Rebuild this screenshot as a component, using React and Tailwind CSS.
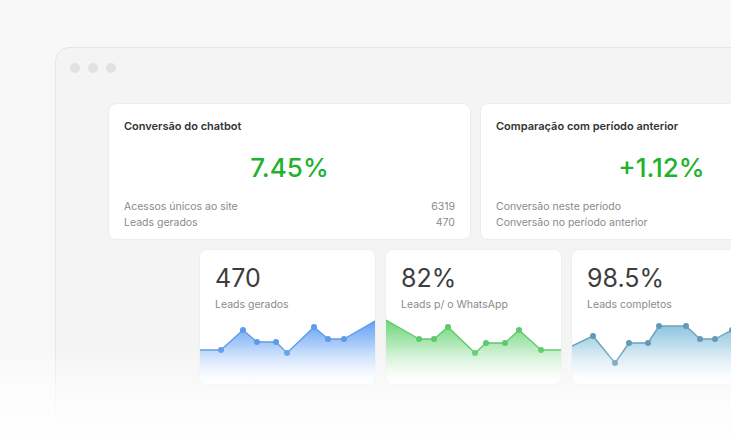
import React from "react";

const font = { fontFamily: "Inter, 'Open Sans', sans-serif" };

function Chart({ pts, dots, stroke, fill, dot, id }) {
  const line = pts.map((p, i) => `${i ? "L" : "M"}${p[0]} ${p[1]}`).join(" ");
  const area = `${line} L177 70 L0 70 Z`;
  return (
    <svg width="177" height="70" viewBox="0 0 177 70" className="block">
      <defs>
        <linearGradient id={id} x1="0" y1="0" x2="0" y2="1">
          <stop offset="0" stopColor={fill} stopOpacity="1" />
          <stop offset="0.45" stopColor={fill} stopOpacity="0.45" />
          <stop offset="0.9" stopColor={fill} stopOpacity="0.04" />
          <stop offset="1" stopColor={fill} stopOpacity="0" />
        </linearGradient>
      </defs>
      <path d={area} fill={`url(#${id})`} />
      <path d={line} fill="none" stroke={stroke} strokeWidth="1.4" strokeLinejoin="round" />
      {dots.map((p, i) => (
        <circle key={i} cx={p[0]} cy={p[1]} r="3" fill={dot} />
      ))}
    </svg>
  );
}

function SmallCard({ value, label, chart }) {
  return (
    <div className="w-[177px] h-[136px] shrink-0 bg-white rounded-[8px] border border-[#efefef] overflow-hidden flex flex-col">
      <div className="pl-[15px] pt-[13px] text-[25px] leading-[30px] text-[#3d3d3d]">{value}</div>
      <div className="pl-[15px] mt-[5px] text-[10.5px] leading-[14px] text-[#8a8a8a]">{label}</div>
      <div className="mt-auto">{chart}</div>
    </div>
  );
}

export default function App() {
  const A = [[0, 36], [21, 36], [43, 16], [57, 28], [76, 28], [87, 39], [114, 13], [128, 25], [144, 25], [177, 6]];
  const B = [[0, 6], [33, 25], [48, 25], [62, 13], [89, 39], [100, 29], [119, 29], [133, 16], [155, 36], [177, 36]];
  const C = [[0, 32], [21, 22], [43, 49], [57, 29], [76, 29], [87, 12], [114, 12], [128, 25], [143, 25], [160, 16], [177, 8]];
  return (
    <div className="relative w-[731px] h-[447px] overflow-hidden bg-[#f8f8f8]" style={font}>
      <div className="pt-[47px] pl-[55px]">
        <div className="w-[820px] h-[378px] rounded-[14px] border border-[#e6e6e6] bg-[#f4f4f4] flex flex-col">
          <div className="flex gap-[8px] pl-[14px] pt-[15px]">
            <div className="w-[10px] h-[10px] rounded-full bg-[#e1e1e1]" />
            <div className="w-[10px] h-[10px] rounded-full bg-[#e1e1e1]" />
            <div className="w-[10px] h-[10px] rounded-full bg-[#e1e1e1]" />
          </div>
          <div className="flex gap-[9px] pl-[52px] mt-[30px]">
            <div className="w-[363px] h-[137px] shrink-0 bg-white rounded-[8px] border border-[#ececec] px-[15px] pt-[14px] flex flex-col">
              <div className="text-[11px] leading-[16px] font-semibold text-[#333]">Conversão do chatbot</div>
              <div className="mt-[20px] text-center text-[26px] leading-[28px] font-medium text-[#1fb22e]">7.45%</div>
              <div className="mt-[17px] flex justify-between text-[10.5px] leading-[16px] text-[#8a8a8a]">
                <span>Acessos únicos ao site</span>
                <span>6319</span>
              </div>
              <div className="flex justify-between text-[10.5px] leading-[16px] text-[#8a8a8a]">
                <span>Leads gerados</span>
                <span>470</span>
              </div>
            </div>
            <div className="w-[363px] h-[137px] shrink-0 bg-white rounded-[8px] border border-[#ececec] px-[15px] pt-[14px] flex flex-col">
              <div className="text-[11px] leading-[16px] font-semibold text-[#333]">Comparação com período anterior</div>
              <div className="mt-[20px] text-center text-[26px] leading-[28px] font-medium text-[#1fb22e]">+1.12%</div>
              <div className="mt-[17px] text-[10.5px] leading-[16px] text-[#8a8a8a]">Conversão neste período</div>
              <div className="text-[10.5px] leading-[16px] text-[#8a8a8a]">Conversão no período anterior</div>
            </div>
          </div>
          <div className="flex gap-[9px] pl-[143px] mt-[9px]">
            <SmallCard
              value="470"
              label="Leads gerados"
              chart={<Chart id="ga" pts={A} dots={A.slice(1, 9)} stroke="#5d9be8" fill="#5f9ff5" dot="#5d9be8" />}
            />
            <SmallCard
              value="82%"
              label="Leads p/ o WhatsApp"
              chart={<Chart id="gb" pts={B} dots={B.slice(1, 9)} stroke="#5ec96b" fill="#6dd57b" dot="#5ec96b" />}
            />
            <SmallCard
              value="98.5%"
              label="Leads completos"
              chart={<Chart id="gc" pts={C} dots={C.slice(1, 10)} stroke="#6aa2c0" fill="#86c0dc" dot="#6299b8" />}
            />
          </div>
        </div>
      </div>
      <div className="absolute left-0 right-0 bottom-0 h-[100px] bg-gradient-to-b from-[#ffffff00] via-[#ffffffb0] to-white" />
    </div>
  );
}
